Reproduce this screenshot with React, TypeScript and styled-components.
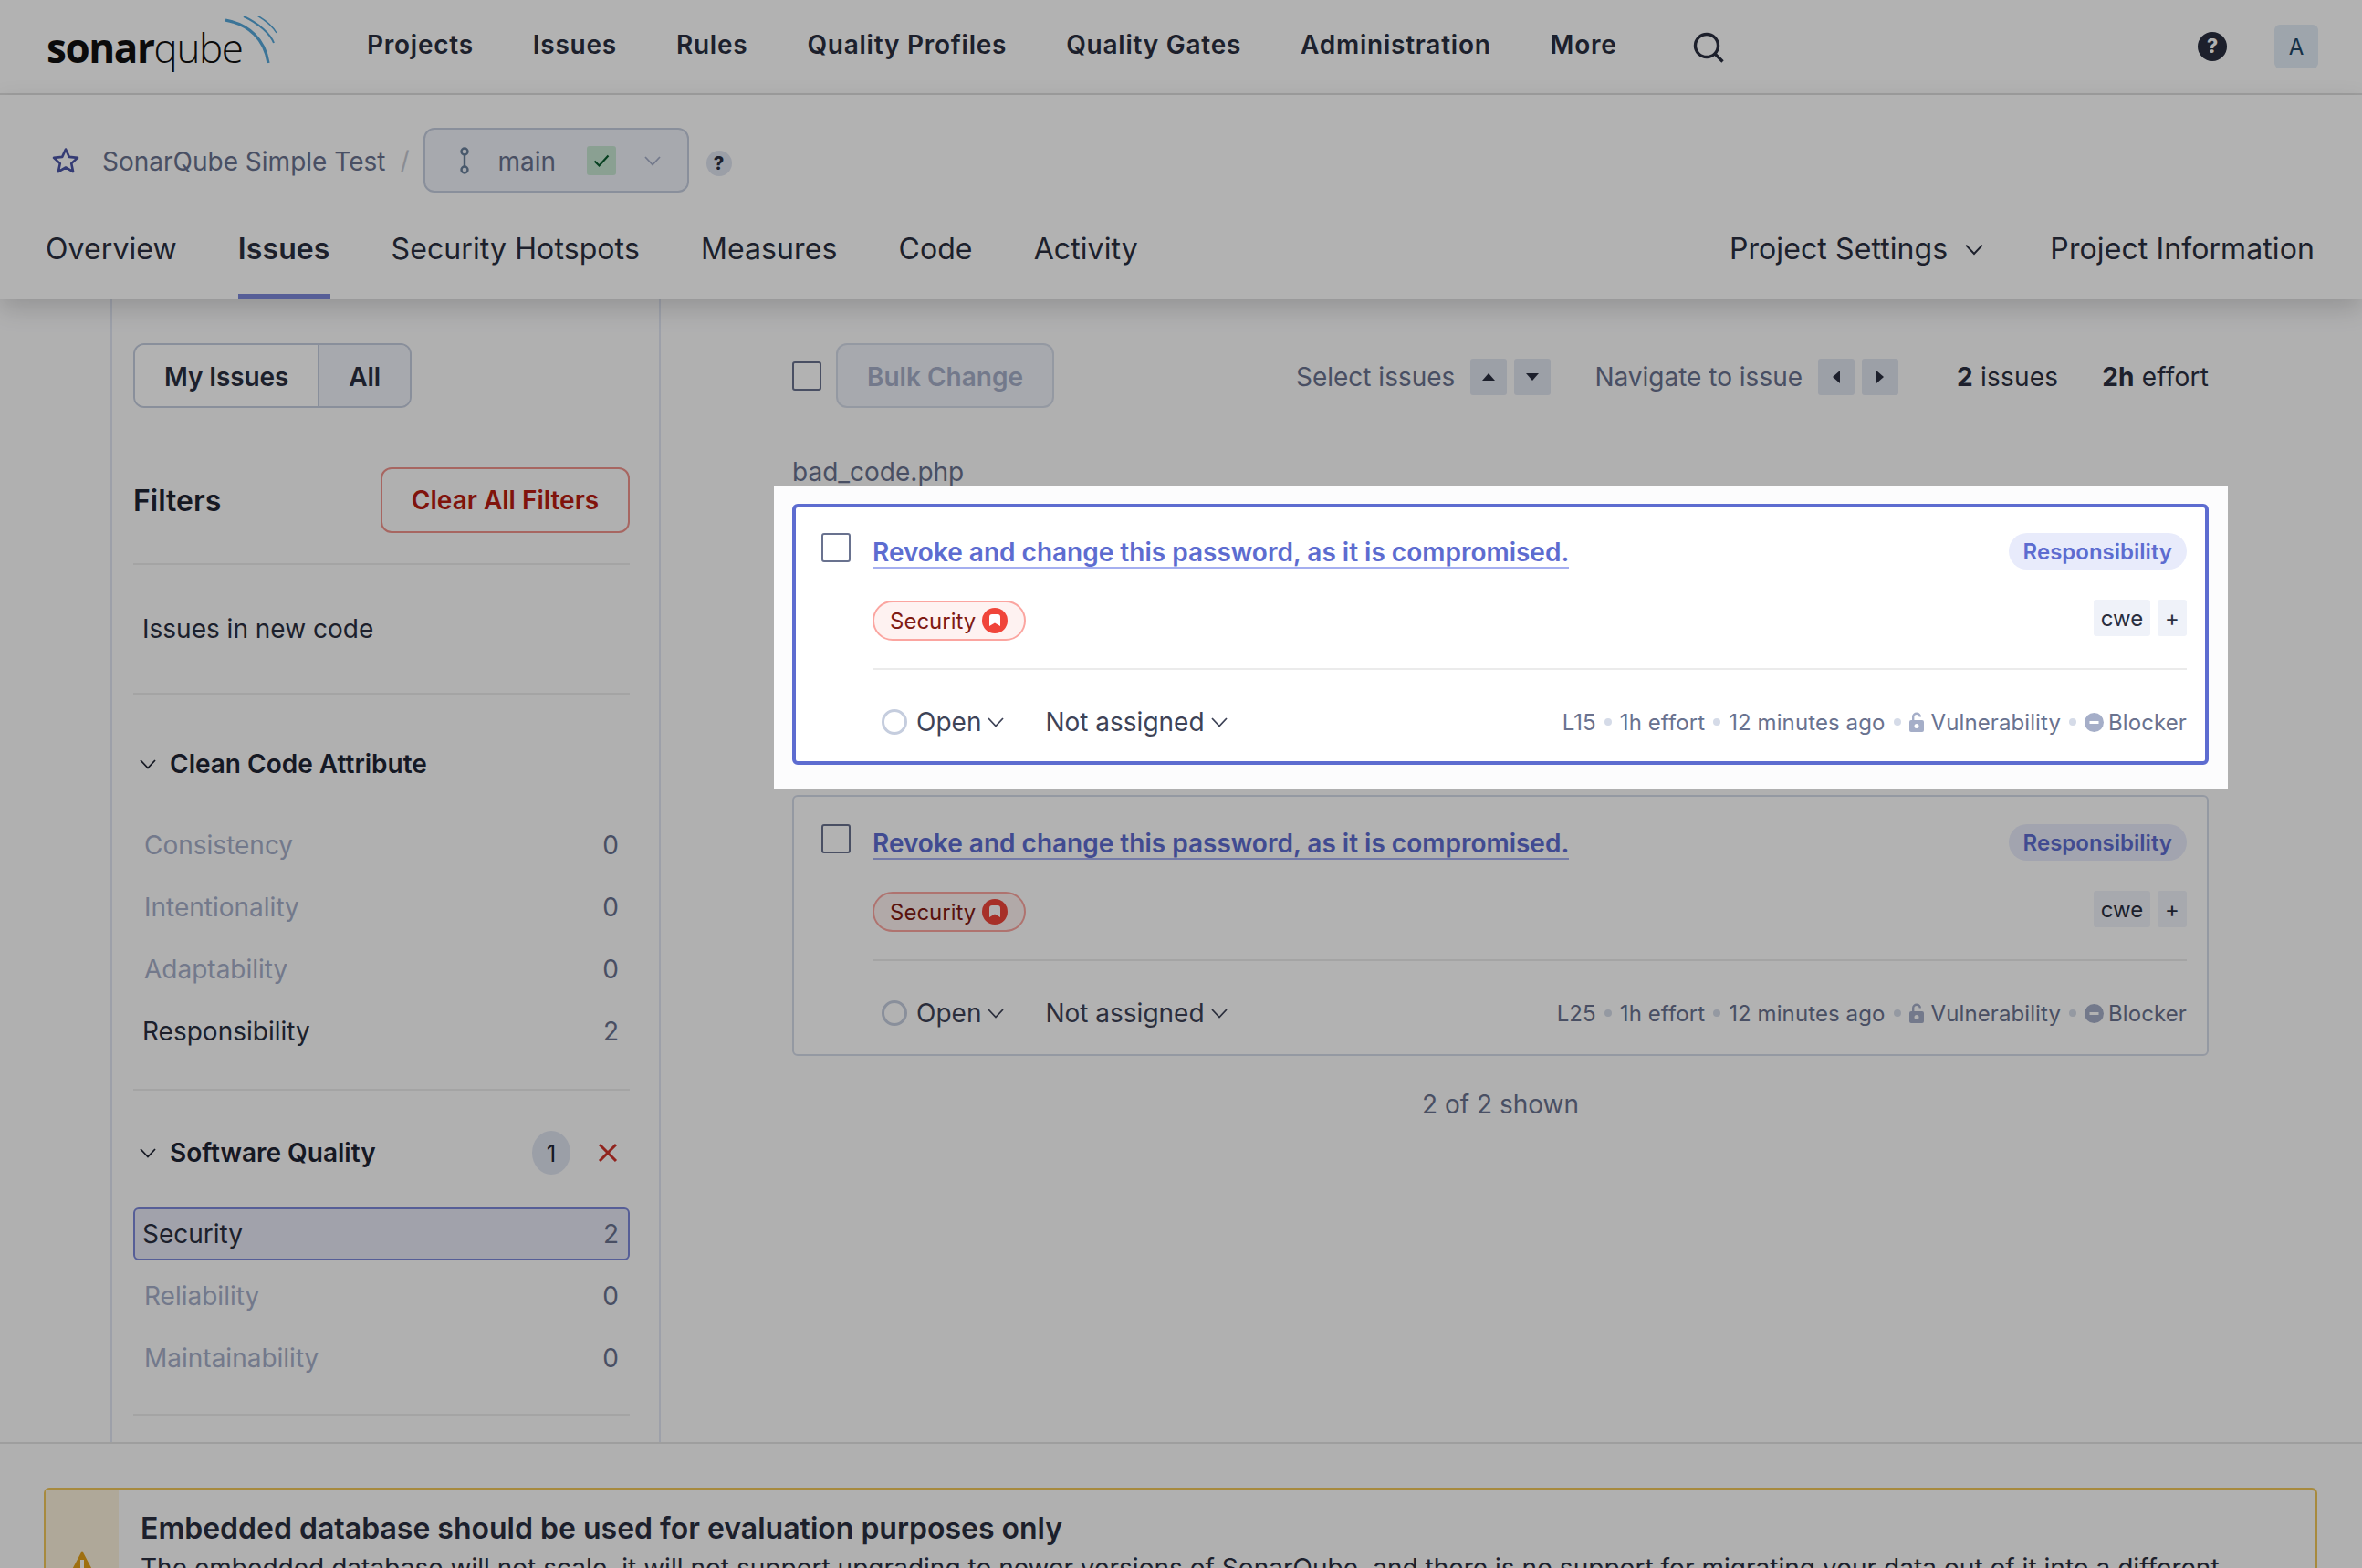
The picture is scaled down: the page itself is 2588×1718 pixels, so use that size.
import React from 'react'
import styled, { createGlobalStyle } from 'styled-components'

const GlobalStyle = createGlobalStyle`
  * { box-sizing: border-box; }
  html, body { margin: 0; padding: 0; background: #fcfcfd; }
  body { font-family: Inter, "Liberation Sans", sans-serif; color: #2a2f40; overflow: hidden; }
`

const Chevron: React.FC<{ size?: number }> = ({ size = 20 }) => (
  <svg width={size} height={size} viewBox="0 0 20 20" fill="none" stroke="currentColor" strokeWidth="1.8">
    <path d="M2 6l8 8.5L18 6" />
  </svg>
)

const Logo: React.FC = () => (
  <LogoWrap>
    <LogoText>
      <b>sonar</b>qube
    </LogoText>
    <LogoArcs width="58" height="54" viewBox="0 0 58 54" fill="none" stroke="#55a6d8">
      <path d="M0 5C26 10 43 26 47 52" strokeWidth="3.2" />
      <path d="M20 1C37 9 49 20 53 30" strokeWidth="2" />
      <path d="M35 0C45 6 52 12 56 19" strokeWidth="1.5" />
    </LogoArcs>
  </LogoWrap>
)

const IssueCard: React.FC<{ line: string; active?: boolean }> = ({ line, active }) => (
  <Card $active={active}>
    <CardCheck />
    <CardBody>
      <CardTop>
        <IssueTitle>Revoke and change this password, as it is compromised.</IssueTitle>
        <AttributePill>Responsibility</AttributePill>
      </CardTop>
      <CardTags>
        <QualityChip>
          Security
          <svg width="28" height="28" viewBox="0 0 28 28">
            <circle cx="14" cy="14" r="14" fill="#f0453a" />
            <path d="M8 10c0-2 1-3 3-3h6c2 0 3 1 3 3v10l-6-3.500L8 20z" fill="#fff" />
          </svg>
        </QualityChip>
        <TagGroup>
          <Tag>cwe</Tag>
          <Tag $small>+</Tag>
        </TagGroup>
      </CardTags>
      <CardBottom>
        <StatusGroup>
          <Status>
            <Radio />
            Open
            <Chevron size={20} />
          </Status>
          <Status>
            Not assigned
            <Chevron size={20} />
          </Status>
        </StatusGroup>
        <Meta>
          <span>{line}</span>
          <Dot />
          <span>1h effort</span>
          <Dot />
          <span>12 minutes ago</span>
          <Dot />
          <svg width="16" height="22" viewBox="0 0 16 22" fill="#a5aec8">
            <path d="M3 9V5.500a5 5 0 0 1 10 0h-2.400a2.600 2.600 0 0 0-5.200 0V9H14a2 2 0 0 1 2 2v9a2 2 0 0 1-2 2H2a2 2 0 0 1-2-2v-9a2 2 0 0 1 2-2zm5 4a2.500 2.500 0 1 0 0 5 2.500 2.500 0 0 0 0-5z" fillRule="evenodd" />
          </svg>
          <span>Vulnerability</span>
          <Dot />
          <svg width="21" height="21" viewBox="0 0 21 21">
            <circle cx="10.500" cy="10.500" r="10.500" fill="#a5aec8" />
            <rect x="5.500" y="9" width="10" height="3" fill="#fff" />
          </svg>
          <BlockerLabel>Blocker</BlockerLabel>
        </Meta>
      </CardBottom>
    </CardBody>
  </Card>
)

const App: React.FC = () => {
  return (
    <Page>
      <GlobalStyle />
      <TopBar>
        <Logo />
        <MainNav>
          <a>Projects</a>
          <a>Issues</a>
          <a>Rules</a>
          <a>Quality Profiles</a>
          <a>Quality Gates</a>
          <a>Administration</a>
          <a>More</a>
        </MainNav>
        <SearchIcon width="34" height="34" viewBox="0 0 34 34" fill="none" stroke="#2a2f40" strokeWidth="3.400">
          <circle cx="15" cy="15" r="12.500" />
          <path d="M24 24l8.500 8.500" />
        </SearchIcon>
        <TopRight>
          <svg width="32" height="32" viewBox="0 0 32 32">
            <circle cx="16" cy="16" r="16" fill="#2a2f40" />
            <text x="16" y="23" fontSize="21" fontWeight="800" textAnchor="middle" fill="#fff" fontFamily="Inter">?</text>
          </svg>
          <Avatar>A</Avatar>
        </TopRight>
      </TopBar>

      <ProjectHeader>
        <Breadcrumb>
          <svg width="32" height="30" viewBox="0 0 32 30" fill="none" stroke="#4b55a6" strokeWidth="2.600" strokeLinejoin="round">
            <path d="M16 2.500l3.800 8.400 9.200 1-6.800 6.200 1.900 9-8.100-4.600-8.100 4.600 1.900-9L3 11.900l9.200-1z" />
          </svg>
          <ProjectName>SonarQube Simple Test</ProjectName>
          <Slash>/</Slash>
          <BranchButton>
            <svg width="14" height="30" viewBox="0 0 14 30" fill="none" stroke="#69809b" strokeWidth="2.400">
              <circle cx="7" cy="5" r="3.500" />
              <circle cx="7" cy="25" r="3.500" />
              <path d="M7 8.500v13" />
            </svg>
            <BranchName>main</BranchName>
            <GateBadge>
              <svg width="20" height="20" viewBox="0 0 20 20" fill="none" stroke="#0a5c2f" strokeWidth="2.200">
                <path d="M2.500 10.500l5 5 10-11" />
              </svg>
            </GateBadge>
            <BranchChevron>
              <Chevron size={20} />
            </BranchChevron>
          </BranchButton>
          <HelpBubble>?</HelpBubble>
        </Breadcrumb>
        <TabBar>
          <Tabs>
            <Tab>Overview</Tab>
            <Tab $active>Issues</Tab>
            <Tab>Security Hotspots</Tab>
            <Tab>Measures</Tab>
            <Tab>Code</Tab>
            <Tab>Activity</Tab>
          </Tabs>
          <Tabs $right>
            <Tab>
              Project Settings
              <Chevron size={22} />
            </Tab>
            <Tab>Project Information</Tab>
          </Tabs>
        </TabBar>
      </ProjectHeader>

      <Content>
        <Sidebar>
          <Toggle>
            <ToggleItem>My Issues</ToggleItem>
            <ToggleItem $on>All</ToggleItem>
          </Toggle>
          <FiltersHead>
            <FiltersTitle>Filters</FiltersTitle>
            <ClearButton>Clear All Filters</ClearButton>
          </FiltersHead>
          <NewCode>Issues in new code</NewCode>
          <Facet $first>
            <FacetHead>
              <Chevron size={20} />
              <span>Clean Code Attribute</span>
            </FacetHead>
            <FacetRow $muted>Consistency<em>0</em></FacetRow>
            <FacetRow $muted>Intentionality<em>0</em></FacetRow>
            <FacetRow $muted>Adaptability<em>0</em></FacetRow>
            <FacetRow>Responsibility<em>2</em></FacetRow>
          </Facet>
          <Facet>
            <FacetHead>
              <Chevron size={20} />
              <span>Software Quality</span>
              <CountBadge>1</CountBadge>
              <ClearX width="24" height="24" viewBox="0 0 24 24" stroke="#d0342c" strokeWidth="3">
                <path d="M3 3l18 18M21 3L3 21" />
              </ClearX>
            </FacetHead>
            <FacetRow $selected>Security<em>2</em></FacetRow>
            <FacetRow $muted>Reliability<em>0</em></FacetRow>
            <FacetRow $muted>Maintainability<em>0</em></FacetRow>
          </Facet>
        </Sidebar>
        <Main>
          <ListBar>
            <BarCheck />
            <BulkButton>Bulk Change</BulkButton>
            <BarRight>
              <Hint>Select issues</Hint>
              <KeyGroup>
                <Key><Tri $dir="up" /></Key>
                <Key><Tri $dir="down" /></Key>
              </KeyGroup>
              <Hint $gap>Navigate to issue</Hint>
              <KeyGroup>
                <Key><Tri $dir="left" /></Key>
                <Key><Tri $dir="right" /></Key>
              </KeyGroup>
              <Totals><b>2</b> issues</Totals>
              <Totals><b>2h</b> effort</Totals>
            </BarRight>
          </ListBar>
          <FileName>bad_code.php</FileName>
          <IssueCard line="L15" active />
          <IssueCard line="L25" />
          <Shown>2 of 2 shown</Shown>
        </Main>
      </Content>

      <Footer>
        <Warning>
          <WarningIcon>
            <svg width="34" height="32" viewBox="0 0 34 32">
              <path d="M17 1l16 30H1z" fill="#e3a019" />
              <rect x="15" y="11" width="4" height="11" fill="#fff" />
            </svg>
          </WarningIcon>
          <WarningText>
            <WarningTitle>Embedded database should be used for evaluation purposes only</WarningTitle>
            <WarningBody>
              The embedded database will not scale, it will not support upgrading to newer versions of SonarQube, and there is no support for migrating your data out of it into a different
            </WarningBody>
          </WarningText>
        </Warning>
      </Footer>

      <Spotlight />
    </Page>
  )
}

const Page = styled.div`
  position: relative;
  width: 2588px;
  height: 1718px;
  overflow: hidden;
  background: #fcfcfd;
`
const TopBar = styled.header`
  height: 104px;
  display: flex;
  align-items: center;
  padding: 0 48px 0 50px;
  background: #fff;
  border-bottom: 2px solid #e3e3e3;
`
const LogoWrap = styled.div`
  position: relative;
  width: 252px;
  height: 70px;
  flex: none;
  margin-top: -6px;
`
const LogoText = styled.div`
  position: absolute;
  left: 1px;
  top: 9px;
  font-family: "Open Sans", sans-serif;
  font-size: 44px;
  font-weight: 300;
  line-height: 60px;
  letter-spacing: -1.4px;
  color: #111;
  b { font-weight: 700; }
`
const LogoArcs = styled.svg`
  position: absolute;
  left: 197px;
  top: 4px;
`
const MainNav = styled.nav`
  display: flex;
  gap: 65px;
  margin-left: 100px;
  font-size: 28px;
  font-weight: 600;
  letter-spacing: 0.75px;
  margin-top: -4px;
`
const SearchIcon = styled.svg`
  margin: 2px 0 0 83px;
`
const TopRight = styled.div`
  margin-left: auto;
  display: flex;
  align-items: center;
  gap: 52px;
`
const Avatar = styled.div`
  width: 48px;
  height: 48px;
  border-radius: 6px;
  background: #e2ecf6;
  color: #1f4766;
  font-size: 24px;
  display: flex;
  align-items: center;
  justify-content: center;
`
const ProjectHeader = styled.div`
  position: relative;
  z-index: 2;
  height: 224px;
  background: #fff;
  padding: 36px 52px 0 50px;
  box-shadow: 0 10px 26px rgba(0, 0, 0, 0.16);
`
const Breadcrumb = styled.div`
  display: flex;
  align-items: center;
  height: 71px;
  padding-left: 6px;
`
const ProjectName = styled.span`
  margin: 2px 0 0 24px;
  font-size: 28px;
  color: #69728f;
`
const Slash = styled.span`
  margin: 0 15px 0 16px;
  font-size: 28px;
  color: #c6c9d2;
`
const BranchButton = styled.div`
  width: 291px;
  height: 71px;
  display: flex;
  align-items: center;
  padding-left: 36px;
  border: 2px solid #c5cdde;
  border-radius: 12px;
  background: #eff2f9;
`
const BranchName = styled.span`
  margin: 2px 0 0 30px;
  font-size: 28px;
  color: #69728f;
`
const GateBadge = styled.span`
  margin-left: 34px;
  width: 32px;
  height: 32px;
  display: flex;
  align-items: center;
  justify-content: center;
  background: #c6e6d2;
  border-radius: 3px;
`
const BranchChevron = styled.span`
  margin-left: 30px;
  display: flex;
  color: #a5aec8;
`
const HelpBubble = styled.span`
  margin: 6px 0 0 19px;
  width: 28px;
  height: 28px;
  border-radius: 50%;
  background: #dfe4f0;
  font-size: 20px;
  font-weight: 800;
  display: flex;
  align-items: center;
  justify-content: center;
`
const TabBar = styled.div`
  display: flex;
  justify-content: space-between;
  margin-top: 22px;
`
const Tabs = styled.div<{ $right?: boolean }>`
  display: flex;
  gap: ${p => (p.$right ? '72px' : '67px')};
`
const Tab = styled.div<{ $active?: boolean }>`
  height: 95px;
  display: flex;
  align-items: center;
  gap: 18px;
  padding-bottom: 10px;
  font-size: 32px;
  letter-spacing: 0.1px;
  font-weight: ${p => (p.$active ? 600 : 400)};
  border-bottom: 6px solid ${p => (p.$active ? '#7b87d9' : 'transparent')};
`
const Content = styled.div`
  height: 1254px;
  display: flex;
  padding-left: 121px;
  border-bottom: 2px solid #e3e3e3;
`
const Sidebar = styled.aside`
  width: 603px;
  padding: 48px 32px 0 23px;
  border-left: 2px solid #e1e6f3;
  border-right: 2px solid #e1e6f3;
`
const Toggle = styled.div`
  display: inline-flex;
  height: 71px;
  border: 2px solid #c5cdde;
  border-radius: 12px;
  overflow: hidden;
  font-size: 28px;
  font-weight: 600;
  letter-spacing: -0.1px;
`
const ToggleItem = styled.div<{ $on?: boolean }>`
  display: flex;
  align-items: center;
  padding: 2px 32px 0;
  background: ${p => (p.$on ? '#eff2f9' : '#fff')};
  & + & { border-left: 2px solid #c5cdde; }
`
const FiltersHead = styled.div`
  display: flex;
  align-items: center;
  justify-content: space-between;
  margin-top: 65px;
  padding-bottom: 33px;
  border-bottom: 2px solid #ebebeb;
`
const FiltersTitle = styled.h2`
  margin: 0;
  font-size: 32px;
  font-weight: 600;
  color: #1f2433;
`
const ClearButton = styled.div`
  width: 273px;
  height: 72px;
  display: flex;
  align-items: center;
  justify-content: center;
  border: 2px solid #f0938c;
  border-radius: 12px;
  font-size: 28px;
  font-weight: 600;
  color: #b81c12;
`
const NewCode = styled.div`
  height: 142px;
  display: flex;
  align-items: center;
  padding-left: 10px;
  font-size: 28px;
  border-bottom: 2px solid #ebebeb;
`
const Facet = styled.section<{ $first?: boolean }>`
  padding: ${p => (p.$first ? '16px 0 24px' : '8px 0 22px')};
  border-bottom: 2px solid #ebebeb;
`
const FacetHead = styled.div`
  height: 120px;
  display: flex;
  align-items: center;
  gap: 14px;
  padding: 0 12px 0 6px;
  font-size: 28px;
  font-weight: 600;
  color: #1f2433;
`
const CountBadge = styled.span`
  margin-left: auto;
  width: 42px;
  height: 48px;
  border-radius: 50%;
  background: #dfe4f0;
  font-size: 26px;
  font-weight: 400;
  display: flex;
  align-items: center;
  justify-content: center;
`
const ClearX = styled.svg`
  margin-left: 15px;
`
const FacetRow = styled.div<{ $muted?: boolean; $selected?: boolean }>`
  height: 58px;
  margin-bottom: 10px;
  display: flex;
  align-items: center;
  justify-content: space-between;
  padding: 0 10px 0 ${p => (p.$muted ? '10px' : '8px')};
  font-size: 28px;
  border-radius: 6px;
  color: ${p => (p.$muted ? '#a5aec8' : '#2a2f40')};
  background: ${p => (p.$selected ? '#e7e9f5' : 'transparent')};
  border: 2px solid ${p => (p.$selected ? '#7b87d9' : 'transparent')};
  em { font-style: normal; color: #69728f; }
`
const Main = styled.main`
  width: 1552px;
  margin-left: 144px;
`
const ListBar = styled.div`
  height: 71px;
  margin-top: 48px;
  display: flex;
  align-items: center;
`
const BarCheck = styled.span`
  width: 32px;
  height: 32px;
  border: 2px solid #69728f;
  border-radius: 3px;
  background: #fff;
`
const BulkButton = styled.div`
  margin-left: 16px;
  width: 239px;
  height: 71px;
  display: flex;
  align-items: center;
  justify-content: center;
  padding-top: 2px;
  font-size: 28px;
  font-weight: 600;
  color: #a5aec8;
  border: 2px solid #d5dbe8;
  border-radius: 12px;
  background: #eff2f9;
`
const BarRight = styled.div`
  margin-left: auto;
  display: flex;
  align-items: center;
  padding-top: 2px;
  font-size: 28px;
`
const Hint = styled.span<{ $gap?: boolean }>`
  margin-left: ${p => (p.$gap ? '48px' : '0')};
  color: #69728f;
`
const KeyGroup = styled.span`
  margin-left: 17px;
  display: flex;
  gap: 8px;
`
const Key = styled.span`
  width: 40px;
  height: 40px;
  border-radius: 3px;
  background: #e0e5f0;
  display: flex;
  align-items: center;
  justify-content: center;
`
const triangle = {
  up: 'border-width: 0 7px 8px; border-color: transparent transparent #2a2f40;',
  down: 'border-width: 8px 7px 0; border-color: #2a2f40 transparent transparent;',
  left: 'border-width: 7px 8px 7px 0; border-color: transparent #2a2f40 transparent transparent;',
  right: 'border-width: 7px 0 7px 8px; border-color: transparent transparent transparent #2a2f40;',
}
const Tri = styled.i<{ $dir: keyof typeof triangle }>`
  width: 0;
  height: 0;
  border-style: solid;
  ${p => triangle[p.$dir]}
`
const Totals = styled.span`
  margin-left: 48px;
  letter-spacing: 0.2px;
  b { font-weight: 700; }
  &:nth-last-child(2) { margin-left: 64px; }
`
const FileName = styled.div`
  margin-top: 53px;
  height: 34px;
  font-size: 28px;
  line-height: 34px;
  color: #69728f;
`
const Card = styled.article<{ $active?: boolean }>`
  display: flex;
  height: 286px;
  margin-top: ${p => (p.$active ? '18px' : '33px')};
  padding: ${p => (p.$active ? '28px 20px 0 28px' : '30px 22px 0 30px')};
  background: #fff;
  border: ${p => (p.$active ? '4px solid #5d6cd0' : '2px solid #d5dbe8')};
  border-radius: 6px;
`
const CardCheck = styled.span`
  flex: none;
  width: 32px;
  height: 32px;
  border: 2px solid #69728f;
  border-radius: 3px;
  background: #fff;
`
const CardBody = styled.div`
  flex: 1;
  margin-left: 24px;
`
const CardTop = styled.div`
  display: flex;
  justify-content: space-between;
  align-items: flex-start;
`
const IssueTitle = styled.a`
  margin-top: 5px;
  font-size: 28px;
  line-height: 32px;
  font-weight: 600;
  color: #5d6cd0;
  border-bottom: 2px solid #a5aff0;
`
const AttributePill = styled.span`
  height: 40px;
  padding: 0 16px;
  display: flex;
  align-items: center;
  border-radius: 20px;
  background: #e8ebfb;
  font-size: 24px;
  font-weight: 600;
  color: #5d6cd0;
`
const CardTags = styled.div`
  display: flex;
  justify-content: space-between;
  align-items: flex-start;
  height: 77px;
  margin-top: 33px;
  border-bottom: 2px solid #ebebeb;
`
const QualityChip = styled.span`
  height: 44px;
  margin-top: 1px;
  padding: 0 18px 0 17px;
  display: inline-flex;
  align-items: center;
  gap: 7px;
  border: 2px solid #fba5a0;
  border-radius: 22px;
  background: #fef2f1;
  font-size: 24px;
  color: #801b14;
`
const TagGroup = styled.span`
  display: flex;
  gap: 8px;
`
const Tag = styled.span<{ $small?: boolean }>`
  height: 40px;
  width: ${p => (p.$small ? '32px' : '62px')};
  border-radius: 3px;
  background: #eff2f9;
  display: flex;
  align-items: center;
  justify-content: center;
  font-size: 24px;
`
const CardBottom = styled.div`
  height: 114px;
  display: flex;
  justify-content: space-between;
  align-items: center;
`
const StatusGroup = styled.div`
  display: flex;
  gap: 44px;
  padding-left: 10px;
`
const Status = styled.span`
  display: inline-flex;
  align-items: center;
  gap: 6px;
  font-size: 28px;
  color: #3e4357;
`
const Radio = styled.i`
  width: 28px;
  height: 28px;
  margin-right: 4px;
  border: 3px solid #c5cdde;
  border-radius: 50%;
`
const Meta = styled.div`
  display: flex;
  align-items: center;
  gap: 8px;
  font-size: 24px;
  letter-spacing: 0.1px;
  color: #69728f;
`
const BlockerLabel = styled.span`
  margin-left: -3px;
`
const Dot = styled.i`
  width: 8px;
  height: 8px;
  border-radius: 50%;
  background: #d5dbe8;
  margin: 0 1px;
`
const Shown = styled.div`
  margin-top: 36px;
  text-align: center;
  font-size: 28px;
  line-height: 34px;
  color: #69728f;
`
const Footer = styled.footer`
  padding: 48px 49px 0 48px;
`
const Warning = styled.div`
  height: 200px;
  display: flex;
  border: 2px solid #efc65a;
  border-top-width: 3px;
  border-radius: 6px;
`
const WarningIcon = styled.div`
  width: 80px;
  background: #fbf1dc;
  display: flex;
  justify-content: center;
  padding-top: 65px;
`
const WarningText = styled.div`
  margin-left: 24px;
  padding-top: 20px;
`
const WarningTitle = styled.div`
  font-size: 32px;
  line-height: 44px;
  font-weight: 600;
`
const WarningBody = styled.div`
  margin-top: 3px;
  font-size: 28px;
  line-height: 36px;
  letter-spacing: 0.03px;
  white-space: nowrap;
`
/* tour highlight: darkens the page everywhere but the first issue */
const Spotlight = styled.div`
  position: absolute;
  z-index: 5;
  left: 848px;
  top: 532px;
  width: 1593px;
  height: 332px;
  box-shadow: 0 0 0 3000px rgba(0, 0, 0, 0.3);
`

export default App
